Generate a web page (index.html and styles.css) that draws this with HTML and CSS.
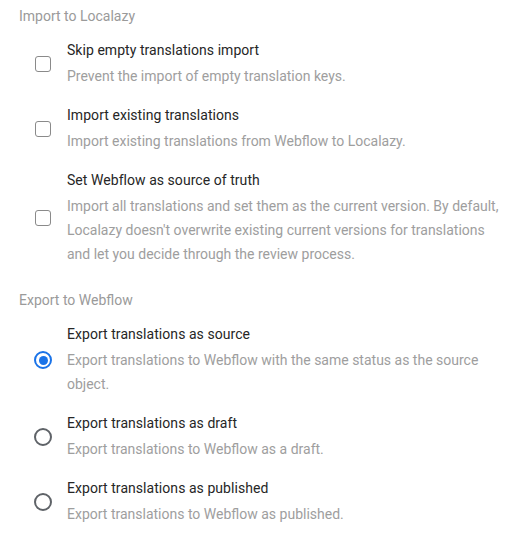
FILE: index.html
```html
<!DOCTYPE html>
<html lang="en">
<head>
<meta charset="utf-8">
<title>Webflow settings</title>
<link rel="stylesheet" href="styles.css">
</head>
<body>
<div class="settings">
  <section class="group">
    <h2 class="group-title">Import to Localazy</h2>
    <div class="options">
      <label class="option">
        <span class="control"><span class="checkbox"></span></span>
        <span class="text">
          <span class="title">Skip empty translations import</span>
          <span class="desc">Prevent the import of empty translation keys.</span>
        </span>
      </label>
      <label class="option">
        <span class="control"><span class="checkbox"></span></span>
        <span class="text">
          <span class="title">Import existing translations</span>
          <span class="desc">Import existing translations from Webflow to Localazy.</span>
        </span>
      </label>
      <label class="option">
        <span class="control"><span class="checkbox"></span></span>
        <span class="text">
          <span class="title">Set Webflow as source of truth</span>
          <span class="desc">Import all translations and set them as the current version. By default, Localazy doesn't overwrite existing current versions for translations and let you decide through the review process.</span>
        </span>
      </label>
    </div>
  </section>
  <section class="group">
    <h2 class="group-title">Export to Webflow</h2>
    <div class="options">
      <label class="option">
        <span class="control"><span class="radio checked"></span></span>
        <span class="text">
          <span class="title">Export translations as source</span>
          <span class="desc">Export translations to Webflow with the same status as the source object.</span>
        </span>
      </label>
      <label class="option">
        <span class="control"><span class="radio"></span></span>
        <span class="text">
          <span class="title">Export translations as draft</span>
          <span class="desc">Export translations to Webflow as a draft.</span>
        </span>
      </label>
      <label class="option">
        <span class="control"><span class="radio"></span></span>
        <span class="text">
          <span class="title">Export translations as published</span>
          <span class="desc">Export translations to Webflow as published.</span>
        </span>
      </label>
    </div>
  </section>
</div>
</body>
</html>
```
FILE: styles.css
```css
html, body {
  margin: 0;
  padding: 0;
  background: #ffffff;
}

body {
  font-family: Roboto, "Liberation Sans", Arial, sans-serif;
  font-size: 14px;
  color: #202124;
}

.settings {
  padding: 6px 19px 0 19px;
  display: flex;
  flex-direction: column;
  gap: 24px;
}

.group-title {
  margin: 0 0 14px 0;
  font-size: 14px;
  font-weight: 400;
  line-height: 20px;
  color: #9a9a9a;
}

.options {
  display: flex;
  flex-direction: column;
  gap: 17px;
}

.option {
  display: flex;
  align-items: center;
  gap: 14px;
  padding-left: 14px;
}

.control {
  width: 20px;
  flex: none;
  display: flex;
  justify-content: center;
  align-items: center;
}

.checkbox {
  width: 14px;
  height: 14px;
  border: 1px solid #8a8a8a;
  border-radius: 3px;
  box-sizing: content-box;
}

.radio {
  width: 14px;
  height: 14px;
  border: 2px solid #5f6368;
  border-radius: 50%;
  display: flex;
  align-items: center;
  justify-content: center;
}

.radio.checked {
  border-color: #1a73e8;
}

.radio.checked::after {
  content: "";
  width: 9px;
  height: 9px;
  border-radius: 50%;
  background: #1a73e8;
}

.text {
  display: flex;
  flex-direction: column;
  min-width: 0;
}

.title {
  line-height: 20px;
  margin-bottom: 4px;
  color: #262626;
  letter-spacing: 0.05px;
}

.desc {
  line-height: 24px;
  color: #9e9e9e;
}
```
